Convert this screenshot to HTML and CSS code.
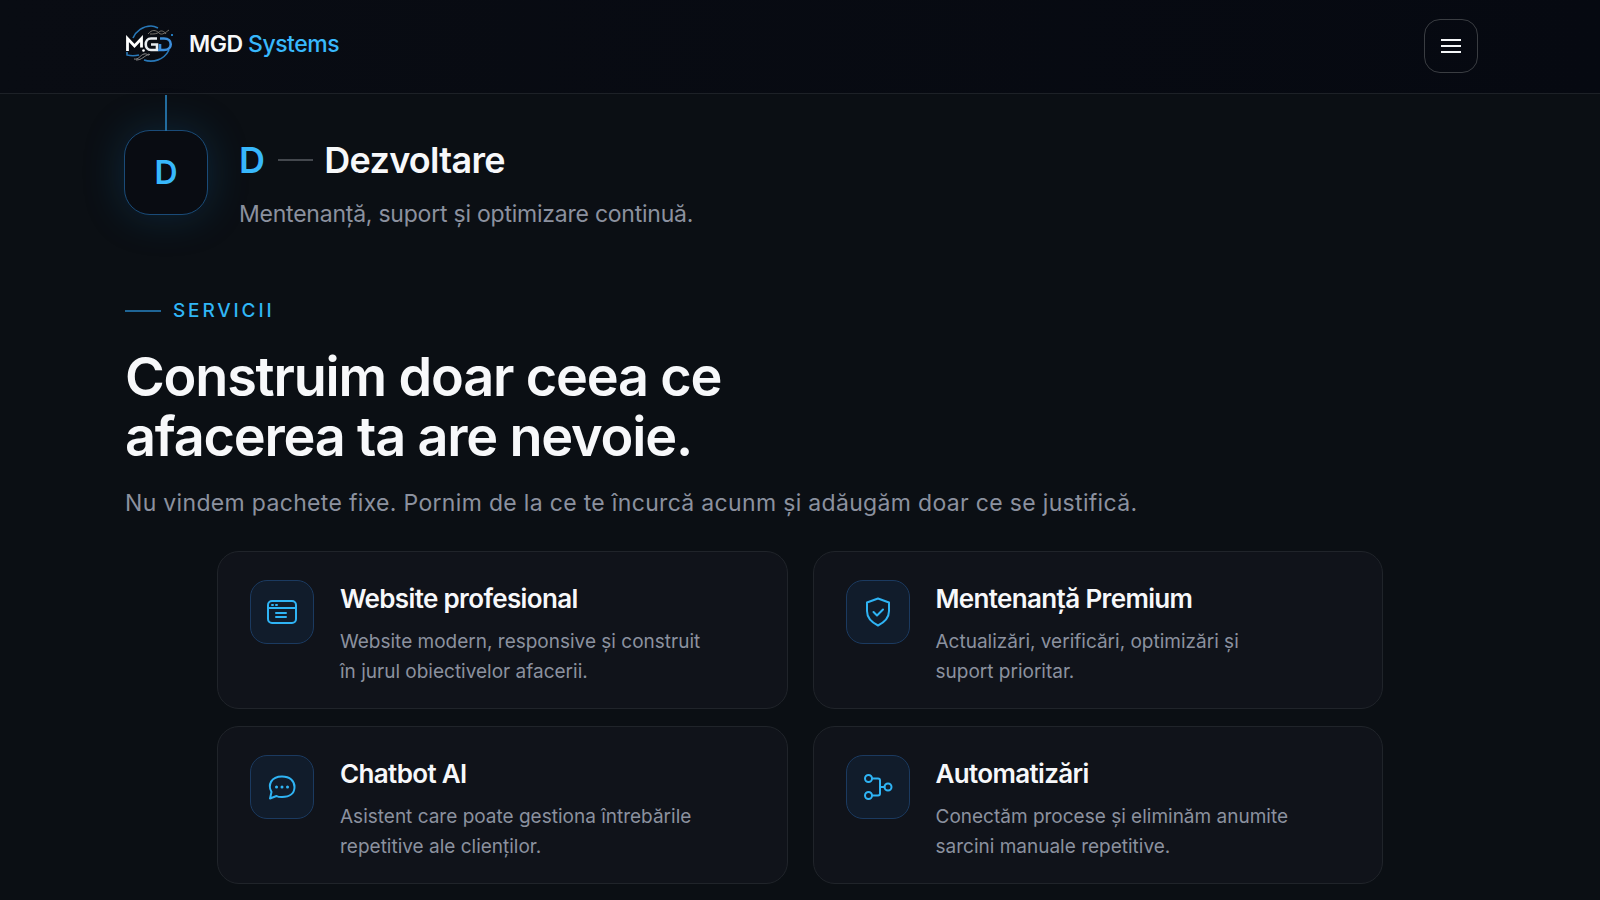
FILE: index.html
```html
<!DOCTYPE html>
<html lang="ro">
<head>
  <meta charset="UTF-8">
  <meta name="viewport" content="width=device-width, initial-scale=1.0">
  <title>MGD Systems</title>
  <link rel="stylesheet" href="styles.css">
</head>

<body>

  <header class="header">
    <a class="brand" href="#">
      <svg class="logo" viewBox="0 0 48 38" fill="none" aria-hidden="true">
        <path d="M7 13C10 6 17 1 25 1c3 0 5 1 7 2" stroke="#2878b8" stroke-width="1.600"/>
        <path d="M1 27v3c4 1 8 1 12 0M18 35c9 3 20 0 25-10" stroke="#2878b8" stroke-width="1.600"/>
        <path d="M22 9c4-5 8-4 11-1s7-1 10-3M24 9c4 0 7 0 9-2s5-1 7 2" stroke="#77736c" stroke-width="1"/>
        <path d="M8 34c5 1 6-4 10-5s3 3 6 0M10 35c6 0 8-4 13-6" stroke="#8a8a8a" stroke-width="1"/>
        <circle cx="46" cy="10" r="1" fill="#2b9df0"/>
        <path d="M1.500 26V13.500l7 7.500 7-7.500v9" stroke="#fff" stroke-width="2.800"/>
        <path d="M31 13.500h-6c-7 0-7 11.500 0 11.500h6v-5.500h-6" stroke="#e8ecf0" stroke-width="2.600"/>
        <path d="M32 25h6c9 0 9-11.500 0-11.500h-4M34 25v-6" stroke="#3d8fdc" stroke-width="2.600"/>
        <circle cx="17.500" cy="25.500" r="1.300" fill="#fff"/>
      </svg>
      <span>MGD <span class="accent">Systems</span></span>
    </a>
    <button class="menu-btn" aria-label="Meniu">
      <svg width="20" height="16" viewBox="0 0 20 16" stroke="#f4f6f8" stroke-width="2" aria-hidden="true">
        <path d="M0 2h20M0 8h20M0 14h20"/>
      </svg>
    </button>
  </header>

  <main class="container">
    <section class="step">
      <div class="step-badge">D</div>
      <div>
        <h3 class="step-title"><span class="accent">D</span><span class="dash"></span>Dezvoltare</h3>
        <p class="step-text">Mentenanță, suport și optimizare continuă.</p>
      </div>
    </section>

    <section class="services">
      <p class="eyebrow">SERVICII</p>
      <h2>Construim doar ceea ce<br>afacerea ta are nevoie.</h2>
      <p class="lead">Nu vindem pachete fixe. Pornim de la ce te încurcă acunm și adăugăm doar ce se justifică.</p>
    </section>

    <div class="cards">
      <article class="card">
        <div class="card-icon">
          <svg viewBox="0 0 32 32" aria-hidden="true">
            <rect x="2" y="5" width="28" height="22" rx="4"/>
            <path d="M2 12h28M10 17h10M10 21h10"/>
            <path d="M6 9h1M10 9h1"/>
          </svg>
        </div>
        <div>
          <h3>Website profesional</h3>
          <p>Website modern, responsive și construit<br>în jurul obiectivelor afacerii.</p>
        </div>
      </article>

      <article class="card">
        <div class="card-icon">
          <svg viewBox="0 0 32 32" aria-hidden="true">
            <path d="M16 2.500l11 4V15c0 7-4 11-11 14.500C9 26 5 22 5 15V6.500z"/>
            <path d="M11.500 16l3.500 3.500 6-6"/>
          </svg>
        </div>
        <div>
          <h3>Mentenanță Premium</h3>
          <p>Actualizări, verificări, optimizări și<br>suport prioritar.</p>
        </div>
      </article>

      <article class="card">
        <div class="card-icon">
          <svg viewBox="0 0 32 32" aria-hidden="true">
            <path d="M4 27.500l1.500-6.500C1.500 14 5 5.500 16 5.500c8 0 12.500 4.500 12.500 10.500S24 26 16 26c-2 0-4 0-5.500-1z"/>
            <path d="M10.500 16h.01M16 16h.01M21.500 16h.01" stroke-width="3"/>
          </svg>
        </div>
        <div>
          <h3>Chatbot AI</h3>
          <p>Asistent care poate gestiona întrebările<br>repetitive ale clienților.</p>
        </div>
      </article>

      <article class="card">
        <div class="card-icon">
          <svg viewBox="0 0 32 32" aria-hidden="true">
            <circle cx="6.500" cy="7.500" r="3.500"/>
            <circle cx="6.500" cy="24.500" r="3.500"/>
            <circle cx="26" cy="16" r="3.500"/>
            <path d="M10 7.500h6q2 0 2 2v13q0 2-2 2h-6M18 16h4.500"/>
          </svg>
        </div>
        <div>
          <h3>Automatizări</h3>
          <p>Conectăm procese și eliminăm anumite<br>sarcini manuale repetitive.</p>
        </div>
      </article>
    </div>
  </main>

</body>
</html>
```
FILE: styles.css
```css
* {
  box-sizing: border-box;
}
body {
  margin: 0;
  background: #0b0f14;
  color: #f7f8fa;
  font-family: Inter, sans-serif;
}
h2, h3, p {
  margin: 0;
}
.accent {
  color: #38b8fc;
}
.header {
  display: flex;
  align-items: center;
  justify-content: space-between;
  height: 94px;
  padding: 0 122px 2px 125px;
  background: linear-gradient(90deg, #090c13, #060911);
  border-bottom: 1px solid #1d2127;
}
.brand {
  display: flex;
  align-items: center;
  gap: 14px;
  padding-bottom: 4px;
  color: #f7f8fa;
  font-size: 23px;
  font-weight: 600;
  letter-spacing: -0.02em;
  text-decoration: none;
}
.brand .accent {
  font-weight: 500;
}
.logo {
  width: 50px;
  height: 38px;
}
.menu-btn {
  display: flex;
  align-items: center;
  justify-content: center;
  width: 54px;
  height: 54px;
  padding: 0;
  background: transparent;
  border: 1px solid #3a3d42;
  border-radius: 16px;
  cursor: pointer;
}
.container {
  max-width: 1352px;
  margin: 0 auto;
}

/* process step */
.step {
  display: flex;
  gap: 31px;
  padding-top: 36px;
}
.step-badge {
  position: relative;
  display: flex;
  align-items: center;
  justify-content: center;
  width: 84px;
  height: 85px;
  background: #090c12;
  border: 1px solid #1a4b78;
  border-radius: 26px;
  box-shadow: 0 0 40px rgba(20, 110, 170, 0.25);
  color: #38b8fc;
  font-size: 32px;
  font-weight: 600;
}
.step-badge::before {
  content: "";
  position: absolute;
  bottom: 100%;
  left: 40px;
  width: 2px;
  height: 36px;
  background: #226c9e;
}
.step-title {
  display: flex;
  align-items: center;
  padding-top: 8px;
  font-size: 36px;
  font-weight: 600;
  line-height: 44px;
  letter-spacing: -0.02em;
}
.dash {
  width: 35px;
  height: 2px;
  margin: 0 11px 0 14px;
  background: #44484e;
}
.step-text {
  margin-top: 15px;
  color: #8b919f;
  font-size: 23px;
  line-height: 34px;
  letter-spacing: -0.01em;
}

/* services */
.services {
  padding: 68px 0 0 1px;
}
.eyebrow {
  display: flex;
  align-items: center;
  gap: 12px;
  color: #30b6f6;
  font-size: 19px;
  font-weight: 500;
  line-height: 24px;
  letter-spacing: 0.15em;
}
.eyebrow::before {
  content: "";
  width: 36px;
  height: 2px;
  background: #1f6596;
}
h2 {
  margin-top: 24px;
  font-size: 54px;
  font-weight: 600;
  line-height: 60px;
  letter-spacing: -0.022em;
}
.lead {
  margin-top: 19px;
  color: #8b919f;
  font-size: 23px;
  line-height: 34px;
  letter-spacing: 0.014em;
}
.cards {
  display: grid;
  grid-template-columns: 1fr 1fr;
  gap: 17px 25px;
  max-width: 1166px;
  margin: 31px auto 16px;
}
.card {
  display: flex;
  gap: 26px;
  padding: 28px 32px 21px;
  background: #10131a;
  border: 1px solid #20242a;
  border-radius: 22px;
}
.card-icon {
  display: flex;
  align-items: center;
  justify-content: center;
  flex-shrink: 0;
  width: 64px;
  height: 64px;
  background: #111c2b;
  border: 1px solid #1b3a60;
  border-radius: 17px;
}
.card-icon svg {
  width: 32px;
  height: 32px;
  fill: none;
  stroke: #2fb4f5;
  stroke-width: 2;
  stroke-linecap: round;
  stroke-linejoin: round;
}
.card h3 {
  font-size: 26px;
  font-weight: 600;
  line-height: 38px;
  letter-spacing: -0.025em;
}
.card p {
  margin-top: 9px;
  color: #8b919f;
  font-size: 19px;
  line-height: 30px;
}
```
